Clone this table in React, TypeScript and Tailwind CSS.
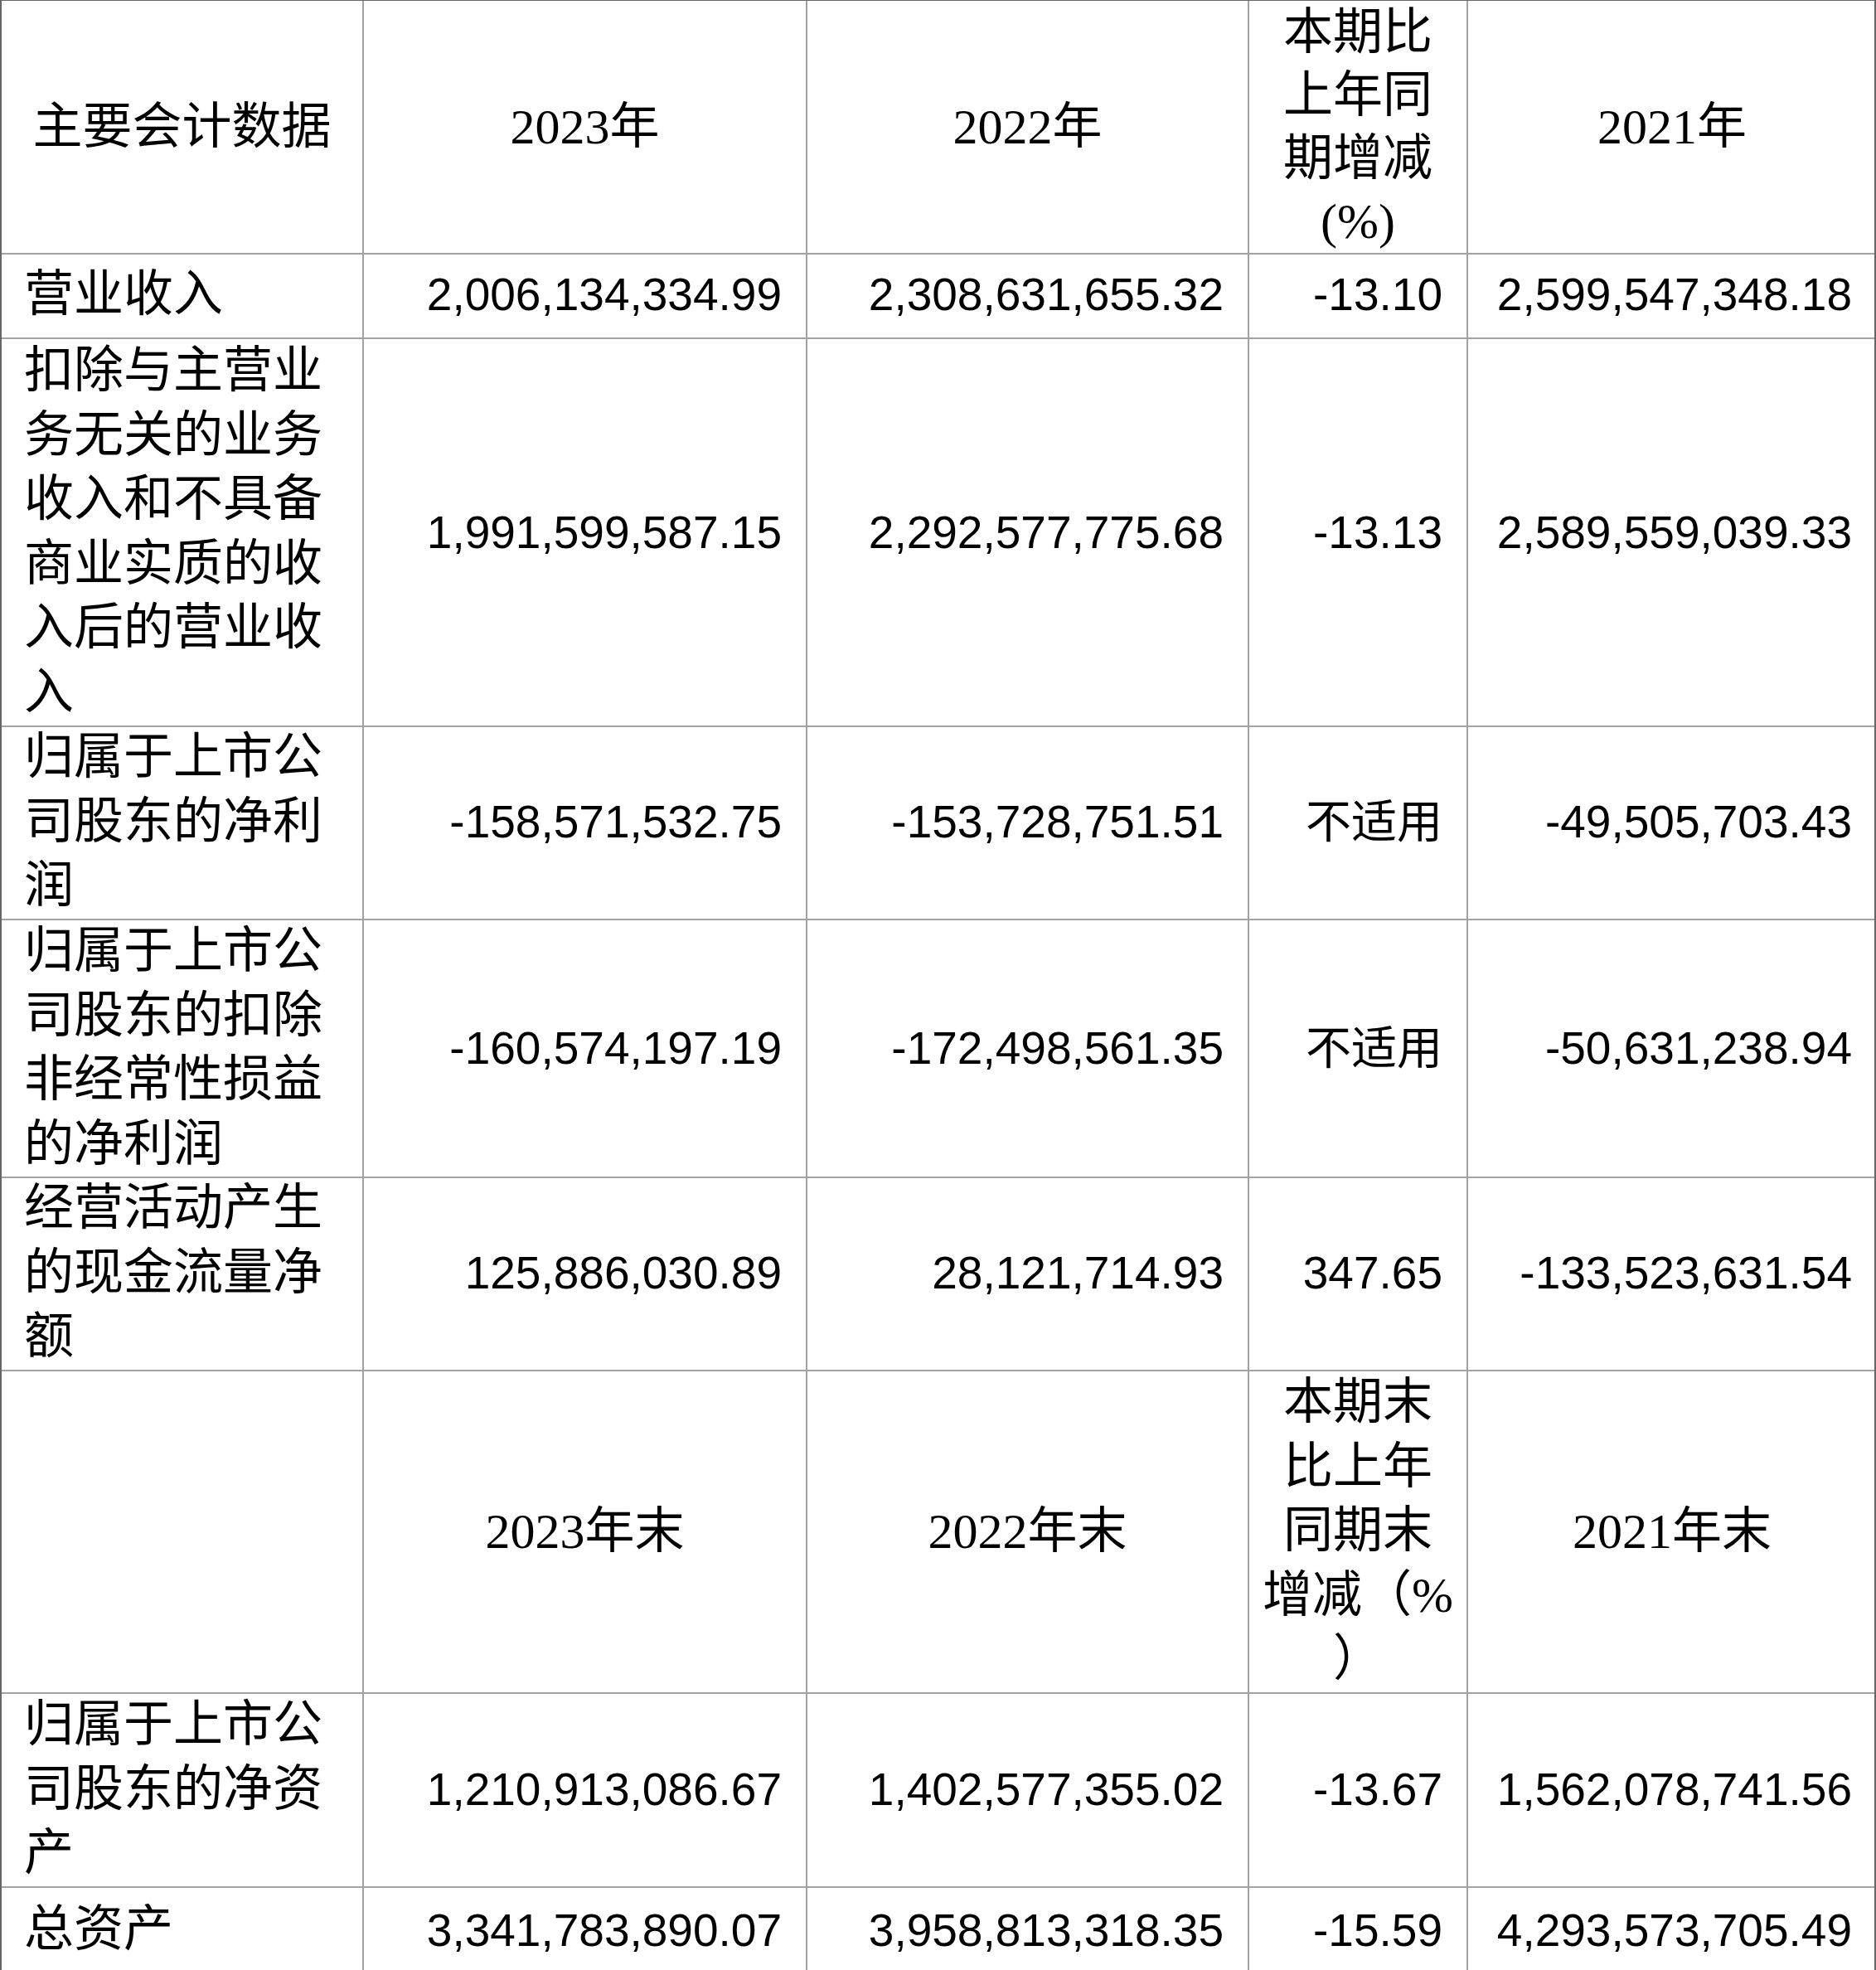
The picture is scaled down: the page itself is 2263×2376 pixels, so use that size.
type Row = {
  label: string;
  values: [string, string, string, string];
  height: string;
};

const ROWS_A: Row[] = [
  { label: '营业收入', values: ['2,006,134,334.99', '2,308,631,655.32', '-13.10', '2,599,547,348.18'], height: 'h-[105px]' },
  {
    label: '扣除与主营业务无关的业务收入和不具备商业实质的收入后的营业收入',
    values: ['1,991,599,587.15', '2,292,577,775.68', '-13.13', '2,589,559,039.33'],
    height: 'h-[466px]',
  },
  { label: '归属于上市公司股东的净利润', values: ['-158,571,532.75', '-153,728,751.51', '不适用', '-49,505,703.43'], height: 'h-[234px]' },
  {
    label: '归属于上市公司股东的扣除非经常性损益的净利润',
    values: ['-160,574,197.19', '-172,498,561.35', '不适用', '-50,631,238.94'],
    height: 'h-[310px]',
  },
  { label: '经营活动产生的现金流量净额', values: ['125,886,030.89', '28,121,714.93', '347.65', '-133,523,631.54'], height: 'h-[234px]' },
];

const ROWS_B: Row[] = [
  { label: '归属于上市公司股东的净资产', values: ['1,210,913,086.67', '1,402,577,355.02', '-13.67', '1,562,078,741.56'], height: 'h-[235px]' },
  { label: '总资产', values: ['3,341,783,890.07', '3,958,813,318.35', '-15.59', '4,293,573,705.49'], height: 'h-[104px]' },
];

const serif = "font-['Liberation_Serif','Noto_Sans_CJK_SC',serif]";
const sans = "font-['Liberation_Sans','Noto_Sans_CJK_SC',sans-serif]";
const cell = 'flex items-center border-r-2 border-b-2 border-[#a3a3a3]';
const grid = 'grid grid-cols-[437px_535px_533px_264px_494px]';

function DataRow({ row }: { row: Row }) {
  return (
    <div className={`${grid} ${row.height}`}>
      <div className={`${cell} pl-[27px] pr-[12px] text-[60px] leading-[77.6px] ${serif}`}>
        <span>{row.label}</span>
      </div>
      {row.values.map((v, i) => (
        <div key={i} className={`${cell} justify-end pr-[29px] text-[55px] ${sans}`}>
          {v}
        </div>
      ))}
    </div>
  );
}

export default function App() {
  return (
    <div className="h-[2376px] w-[2263px] overflow-hidden bg-white text-black">
      <div className="relative border-l-2 border-t border-[#666]">
        {/* ── period header ── */}
        <div className={`${grid} h-[303px]`}>
          <div className={`${cell} justify-center text-[60px] ${serif}`}>主要会计数据</div>
          <div className={`${cell} justify-center text-[60px] ${serif}`}>2023年</div>
          <div className={`${cell} justify-center text-[60px] ${serif}`}>2022年</div>
          <div className={`${cell} flex-col justify-center text-center text-[60px] leading-[76px] ${serif}`}>
            <span className="block">本期比</span>
            <span className="block">上年同</span>
            <span className="block">期增减</span>
            <span className="block">(%)</span>
          </div>
          <div className={`${cell} justify-center text-[60px] ${serif}`}>2021年</div>
        </div>

        {ROWS_A.map((r) => (
          <DataRow key={r.label} row={r} />
        ))}

        {/* ── year-end header ── */}
        <div className={`${grid} h-[389px]`}>
          <div className={cell} />
          <div className={`${cell} justify-center text-[60px] ${serif}`}>2023年末</div>
          <div className={`${cell} justify-center text-[60px] ${serif}`}>2022年末</div>
          <div className={`${cell} flex-col justify-center text-center text-[60px] leading-[77.5px] ${serif}`}>
            <span className="block">本期末</span>
            <span className="block">比上年</span>
            <span className="block">同期末</span>
            <span className="block whitespace-nowrap">增减（%</span>
            <span className="block">）</span>
          </div>
          <div className={`${cell} justify-center text-[60px] ${serif}`}>2021年末</div>
        </div>

        {ROWS_B.map((r) => (
          <DataRow key={r.label} row={r} />
        ))}

        {/* outer right edge is darker than the inner rules */}
        <div className="pointer-events-none absolute right-0 top-[-1px] h-[2376px] w-[2px] bg-[#666]" />
      </div>
    </div>
  );
}
